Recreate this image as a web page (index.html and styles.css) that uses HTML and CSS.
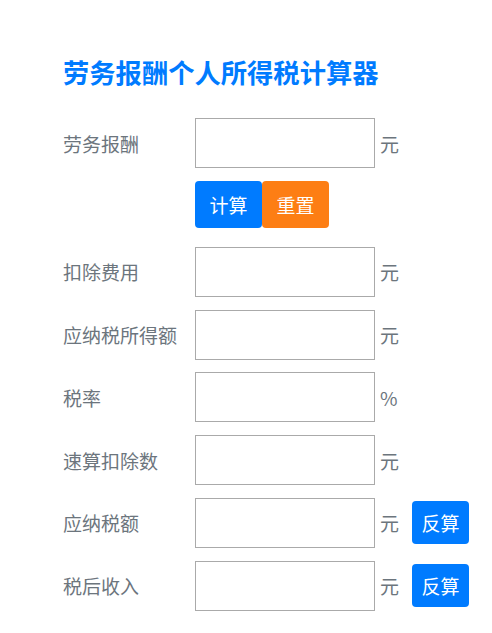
FILE: index.html
```html
<!DOCTYPE html>
<html lang="zh">
<head>
<meta charset="utf-8">
<link rel="stylesheet" href="styles.css">
</head>
<body>
<div class="calc">
  <h1 class="title">劳务报酬个人所得税计算器</h1>
  <div class="row">
    <label class="label">劳务报酬</label>
    <input class="field" type="text">
    <span class="unit">元</span>
  </div>
  <div class="actions">
    <button class="btn btn-blue btn-main">计算</button>
    <button class="btn btn-orange btn-main">重置</button>
  </div>
  <div class="row">
    <label class="label">扣除费用</label>
    <input class="field" type="text">
    <span class="unit">元</span>
  </div>
  <div class="row">
    <label class="label">应纳税所得额</label>
    <input class="field" type="text">
    <span class="unit">元</span>
  </div>
  <div class="row">
    <label class="label">税率</label>
    <input class="field" type="text">
    <span class="unit">%</span>
  </div>
  <div class="row">
    <label class="label">速算扣除数</label>
    <input class="field" type="text">
    <span class="unit">元</span>
  </div>
  <div class="row">
    <label class="label">应纳税额</label>
    <input class="field" type="text">
    <span class="unit">元</span>
    <button class="btn btn-blue btn-small">反算</button>
  </div>
  <div class="row">
    <label class="label">税后收入</label>
    <input class="field" type="text">
    <span class="unit">元</span>
    <button class="btn btn-blue btn-small">反算</button>
  </div>
</div>
</body>
</html>
```
FILE: styles.css
```css
html, body {
  margin: 0;
  padding: 0;
  background: #fff;
}
body {
  font-family: "Noto Sans CJK SC", "Noto Sans", sans-serif;
}
.calc {
  padding: 52px 0 0 63px;
}
.title {
  margin: 0 0 26px;
  font-size: 26.3px;
  line-height: 40px;
  font-weight: 700;
  color: #007bff;
}
.row {
  display: flex;
  align-items: center;
  height: 50px;
  margin-bottom: 12.8px;
}
.label {
  width: 132px;
  flex: none;
  font-size: 19px;
  color: #6c757d;
}
.field {
  box-sizing: border-box;
  width: 180px;
  height: 50px;
  margin: 0;
  border: 1px solid #aaa;
  border-radius: 0;
  padding: 0 8px;
  font-size: 18px;
  outline: none;
}
.unit {
  margin-left: 5px;
  font-size: 19px;
  color: #6c757d;
}
.actions {
  display: flex;
  margin: 0 0 19px 132px;
}
.btn {
  border: none;
  color: #fff;
  font-family: "Noto Sans CJK SC", "Noto Sans", sans-serif;
  font-size: 19px;
  line-height: 27px;
  border-radius: 4px;
  cursor: pointer;
  margin: 0;
}
.btn-main {
  width: 67px;
  height: 47px;
  padding: 0;
}
.btn-small {
  width: 57px;
  height: 43px;
  padding: 0;
  margin-left: 13px;
}
.btn-blue {
  background: #007bff;
}
.btn-orange {
  background: #fd7e14;
}
```
